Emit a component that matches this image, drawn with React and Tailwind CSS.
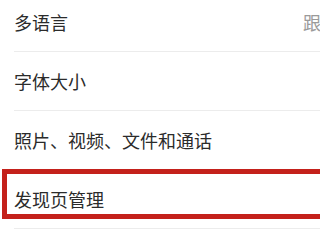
export default function App() {
  const rows = [
    { label: '多语言', value: '跟随系统' },
    { label: '字体大小' },
    { label: '照片、视频、文件和通话' },
    { label: '发现页管理' },
  ]

  return (
    <div
      className="relative w-[320px] h-[240px] overflow-hidden bg-white"
      style={{ fontFamily: '"Noto Sans CJK SC", "Noto Sans", sans-serif' }}
    >
      <div className="-mt-[7px]">
        {rows.map((row) => (
          <div key={row.label} className="pl-[14px]">
            <div className="h-[58px] flex items-center justify-between">
              <span className="text-[18px] text-[#2b2b2b] whitespace-nowrap">{row.label}</span>
              {row.value && (
                <span className="text-[18px] text-[#9a9a9a] whitespace-nowrap -mr-[55px]">{row.value}</span>
              )}
            </div>
            <div className="h-px bg-[#ececec]" />
          </div>
        ))}
      </div>

      {/* highlight box */}
      <div className="absolute left-[2px] top-[169px] w-[340px] h-[50px] border-[5px] border-[#c4211b]" />
    </div>
  )
}
